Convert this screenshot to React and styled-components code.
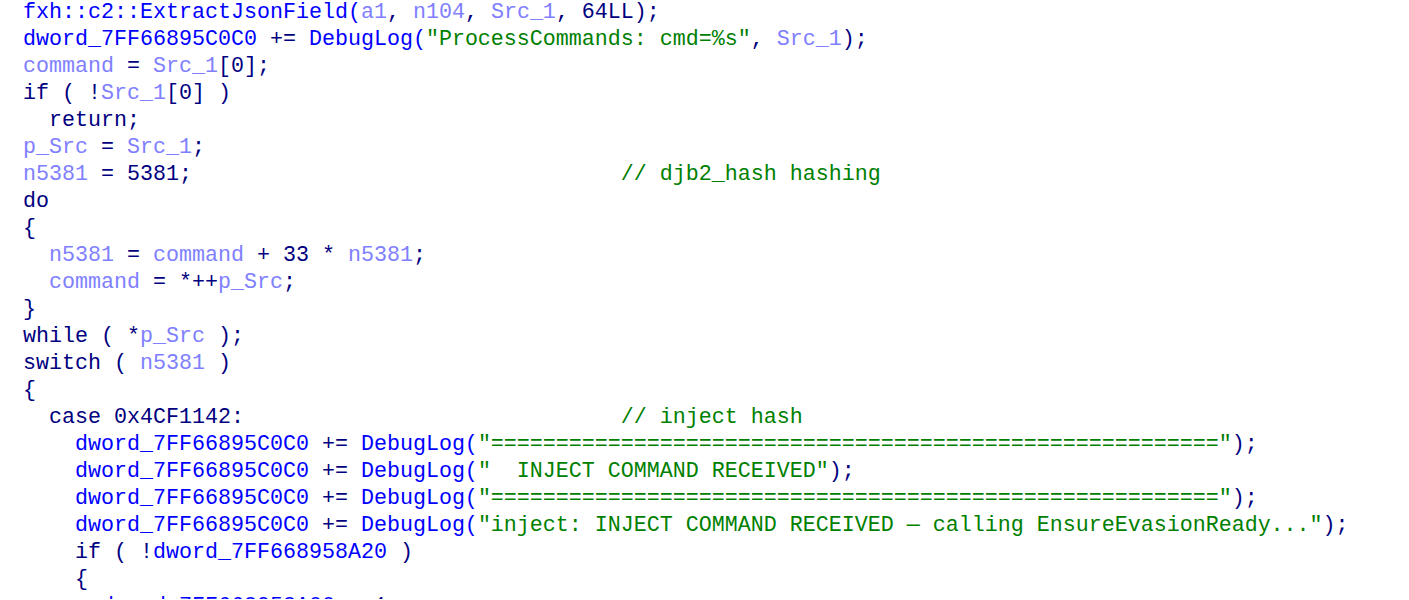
import { createGlobalStyle, styled } from "styled-components";

const EQ = "=".repeat(56);
const pad = (n) => " ".repeat(n);

const lines = [
  [["fn", "fxh::c2::ExtractJsonField("], ["var", "a1"], ["kw", ", "], ["var", "n104"], ["kw", ", "], ["var", "Src_1"], ["kw", ", 64LL);"]],
  [["fn", "dword_7FF66895C0C0"], ["kw", " += "], ["fn", "DebugLog("], ["str", '"ProcessCommands: cmd=%s"'], ["kw", ", "], ["var", "Src_1"], ["kw", ");"]],
  [["var", "command"], ["kw", " = "], ["var", "Src_1"], ["kw", "[0];"]],
  [["kw", "if ( !"], ["var", "Src_1"], ["kw", "[0] )"]],
  [["kw", "  return;"]],
  [["var", "p_Src"], ["kw", " = "], ["var", "Src_1"], ["kw", ";"]],
  [["var", "n5381"], ["kw", " = 5381;" + pad(33)], ["cm", "// djb2_hash hashing"]],
  [["kw", "do"]],
  [["kw", "{"]],
  [["kw", "  "], ["var", "n5381"], ["kw", " = "], ["var", "command"], ["kw", " + 33 * "], ["var", "n5381"], ["kw", ";"]],
  [["kw", "  "], ["var", "command"], ["kw", " = *++"], ["var", "p_Src"], ["kw", ";"]],
  [["kw", "}"]],
  [["kw", "while ( *"], ["var", "p_Src"], ["kw", " );"]],
  [["kw", "switch ( "], ["var", "n5381"], ["kw", " )"]],
  [["kw", "{"]],
  [["kw", "  case 0x4CF1142:" + pad(29)], ["cm", "// inject hash"]],
  [["kw", "    "], ["fn", "dword_7FF66895C0C0"], ["kw", " += "], ["fn", "DebugLog("], ["str", `"${EQ}"`], ["kw", ");"]],
  [["kw", "    "], ["fn", "dword_7FF66895C0C0"], ["kw", " += "], ["fn", "DebugLog("], ["str", '"  INJECT COMMAND RECEIVED"'], ["kw", ");"]],
  [["kw", "    "], ["fn", "dword_7FF66895C0C0"], ["kw", " += "], ["fn", "DebugLog("], ["str", `"${EQ}"`], ["kw", ");"]],
  [["kw", "    "], ["fn", "dword_7FF66895C0C0"], ["kw", " += "], ["fn", "DebugLog("], ["str", '"inject: INJECT COMMAND RECEIVED \u2014 calling EnsureEvasionReady..."'], ["kw", ");"]],
  [["kw", "    if ( !"], ["fn", "dword_7FF668958A20"], ["kw", " )"]],
  [["kw", "    {"]],
  [["kw", "      "], ["fn", "dword_7FF668958A00"], ["kw", " = 1;"]],
];

function App() {
  return (
    <>
      <GlobalStyle />
      <CodeView>
        {lines.map((tokens, i) => (
          <CodeLine key={i}>
            {tokens.map(([kind, text], j) => (
              <Token key={j} $kind={kind}>
                {text}
              </Token>
            ))}
          </CodeLine>
        ))}
      </CodeView>
    </>
  );
}
export default App;

const GlobalStyle = createGlobalStyle`
  html, body {
    margin: 0;
    padding: 0;
    background: #ffffff;
    overflow: hidden;
  }
`;

const colors = {
  kw: "#000080",
  fn: "#0000ff",
  var: "#8080ff",
  str: "#008000",
  cm: "#008000",
};

const CodeView = styled.div`
  width: 1409px;
  height: 600px;
  overflow: hidden;
  box-sizing: border-box;
  padding-left: 23px;
  margin-top: -1px;
  background: #ffffff;
  font-family: "Liberation Mono", "DejaVu Sans Mono", monospace;
  font-size: 21.67px;
  line-height: 27px;
`;

const CodeLine = styled.div`
  height: 27px;
  white-space: pre;
`;

const Token = styled.span`
  color: ${(p) => colors[p.$kind]};
`;
